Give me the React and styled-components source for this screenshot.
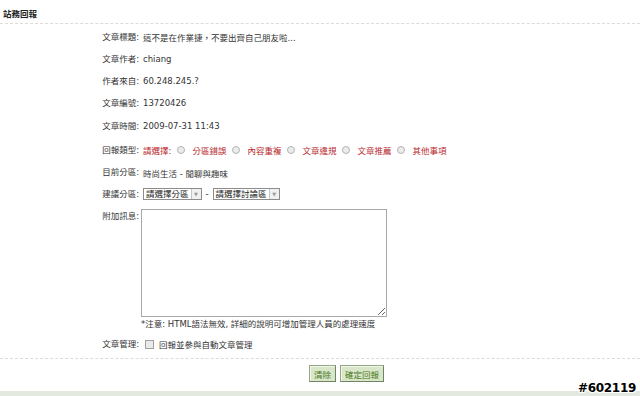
import React from 'react';
import styled, { createGlobalStyle } from 'styled-components';

const GlobalStyle = createGlobalStyle`
  body {
    margin: 0;
    background: #fff;
    font-family: "DejaVu Sans", "Noto Sans CJK TC", sans-serif;
  }
`;

const Page = styled.div`
  position: relative;
  width: 640px;
  height: 396px;
  overflow: hidden;
  background: #fff;
  color: #333;
  font-size: 8.5px;
`;

const Header = styled.div`
  height: 24px;
  box-sizing: border-box;
  padding: 7px 0 0 3px;
  border-bottom: 1px dashed #dcdcd4;
  font-weight: bold;
  font-size: 8.5px;
  color: #222;
`;

const Form = styled.div`
  display: grid;
  grid-template-columns: 139px 1fr;
  column-gap: 4px;
  padding-top: 2px;
`;

const Label = styled.div`
  text-align: right;
  height: ${p => p.h || 22}px;
  line-height: ${p => (p.top ? '12px' : `${p.h || 22}px`)};
  padding-top: ${p => p.pt || 0}px;
  box-sizing: border-box;
  white-space: nowrap;
`;

const Value = styled.div`
  display: flex;
  align-items: center;
  height: ${p => p.h || 22}px;
  white-space: nowrap;
`;

const Red = styled.span`
  color: #b8282e;
`;

const Radio = styled.span`
  display: inline-block;
  width: 6px;
  height: 6px;
  border-radius: 50%;
  border: 1px solid #b4b4b4;
  background: #ececec;
  margin: 0 7px 0 6px;
`;

const Select = styled.span`
  display: inline-flex;
  align-items: stretch;
  height: 12px;
  border: 1px solid #8c8c8c;
  box-sizing: border-box;
  background: #fff;
  color: #222;
`;

const SelectText = styled.span`
  padding: 0 2px;
  line-height: 10px;
`;

const SelectArrow = styled.span`
  width: 9px;
  border-left: 1px solid #c4c4c4;
  background: #f0f0f0;
  color: #999;
  font-size: 5px;
  display: flex;
  align-items: center;
  justify-content: center;
`;

const Dash = styled.span`
  margin: 0 4px;
`;

const TextArea = styled.textarea`
  display: block;
  width: 246px;
  height: 108px;
  box-sizing: border-box;
  border: 1px solid #a8a8a8;
  margin: 4px 0 0 -2px;
  padding: 0;
  background: #fff;
  outline: none;
`;

const Note = styled.div`
  height: 14px;
  line-height: 14px;
  margin-left: -2px;
  white-space: nowrap;
`;

const Checkbox = styled.span`
  display: inline-block;
  width: 7px;
  height: 7px;
  border: 1px solid #a0a0a0;
  background: #eaeaea;
  margin: 0 5px 0 2px;
`;

const Footer = styled.div`
  margin-top: 1px;
  border-top: 1px dashed #dcdcd4;
  padding: 6px 0 0 309px;
  display: flex;
  gap: 4px;
`;

const Button = styled.button`
  height: 17px;
  padding: 0 4px;
  font: inherit;
  font-size: 8.5px;
  color: #4a7a22;
  background: #d9e6c9;
  border: 1px solid #93a884;
  border-right-color: #6f8460;
  border-bottom-color: #6f8460;
  box-shadow: inset 1px 1px 0 #f0f6e8;
`;

const BottomBand = styled.div`
  position: absolute;
  left: 0;
  right: 0;
  bottom: 0;
  height: 5px;
  background: #e4e9e0;
`;

const Watermark = styled.div`
  position: absolute;
  right: 4px;
  bottom: 1px;
  font-family: "DejaVu Sans", sans-serif;
  font-weight: bold;
  font-size: 12px;
  letter-spacing: -0.3px;
  color: #000;
  text-shadow: 1px 0 0 #fff, -1px 0 0 #fff, 0 1px 0 #fff, 0 -1px 0 #fff,
    1px 1px 0 #fff, -1px -1px 0 #fff, 1px -1px 0 #fff, -1px 1px 0 #fff;
`;

const reportTypes = ['分區錯誤', '內容重複', '文章違規', '文章推薦', '其他事項'];

export default function App() {
  return (
    <Page>
      <GlobalStyle />
      <Header>站務回報</Header>
      <Form>
        <Label>文章標題:</Label>
        <Value>這不是在作業捷，不要出齊自己朋友啦...</Value>

        <Label>文章作者:</Label>
        <Value>chiang</Value>

        <Label>作者來自:</Label>
        <Value>60.248.245.?</Value>

        <Label>文章編號:</Label>
        <Value>13720426</Value>

        <Label h={24}>文章時間:</Label>
        <Value h={24}>2009-07-31 11:43</Value>

        <Label h={24}>回報類型:</Label>
        <Value h={24}>
          <Red>請選擇:</Red>
          {reportTypes.map(t => (
            <React.Fragment key={t}>
              <Radio />
              <Red>{t}</Red>
            </React.Fragment>
          ))}
        </Value>

        <Label h={21}>目前分區:</Label>
        <Value h={21}>時尚生活 - 閒聊與趣味</Value>

        <Label>建議分區:</Label>
        <Value>
          <Select>
            <SelectText>請選擇分區</SelectText>
            <SelectArrow>▼</SelectArrow>
          </Select>
          <Dash>-</Dash>
          <Select>
            <SelectText>請選擇討論區</SelectText>
            <SelectArrow>▼</SelectArrow>
          </Select>
        </Value>

        <Label h={112} top pt={5}>附加訊息:</Label>
        <div>
          <TextArea />
        </div>

        <div />
        <Note>*注意: HTML語法無效, 詳細的說明可增加管理人員的處理速度</Note>

        <Label h={26}>文章管理:</Label>
        <Value h={26}>
          <Checkbox />
          回報並參與自動文章管理
        </Value>
      </Form>
      <Footer>
        <Button>清除</Button>
        <Button>確定回報</Button>
      </Footer>
      <BottomBand />
      <Watermark>#602119</Watermark>
    </Page>
  );
}
